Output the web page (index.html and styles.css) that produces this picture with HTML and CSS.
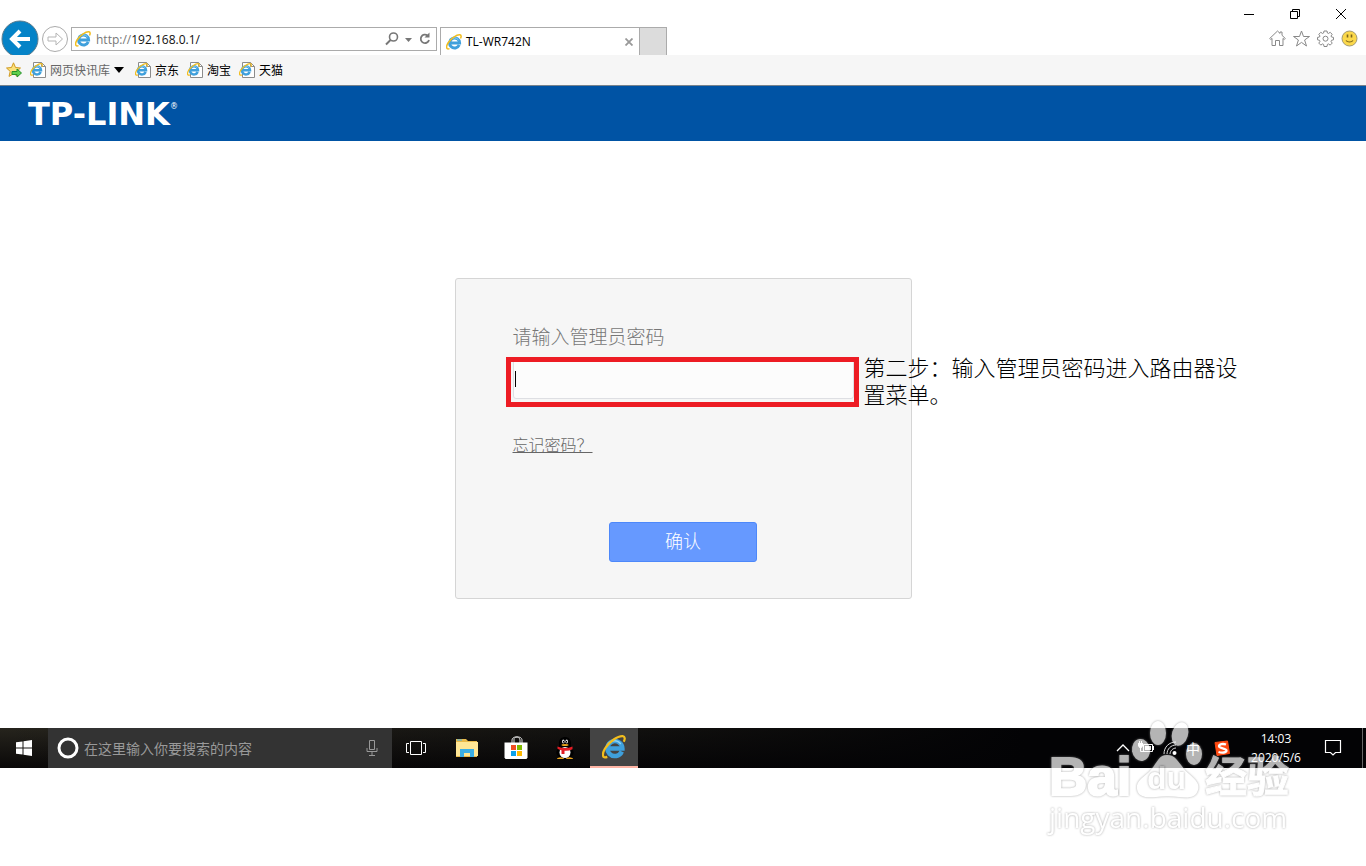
FILE: index.html
```html
<!DOCTYPE html>
<html lang="zh-CN">
<head>
<meta charset="utf-8">
<meta name="viewport" content="width=device-width, initial-scale=1">
<title>TL-WR742N</title>
<link rel="stylesheet" href="styles.css">
</head>
<body>
<svg class="defs" width="0" height="0" aria-hidden="true">
<symbol id="ie" viewBox="0 0 16 16">
<path d="M13.2 11A5 5 0 1 1 13.600 9H5" fill="none" stroke="#3fa0dc" stroke-width="3"/>
<path d="M4.200 6A5 5 0 0 1 12.500 6" fill="none" stroke="#8ed3f5" stroke-width="1"/>
<path d="M3.500 14.600C.2 16-.2 12.800 2 9 5 4.200 10.600 .6 13.800 .8 15.500 1 15.400 2.800 14.500 4.500" fill="none" stroke="#f2bd1d" stroke-width="1.500"/>
</symbol>
<symbol id="page" viewBox="0 0 16 16">
<path d="M3.500 .5h8l4 4v11h-12z" fill="#fff" stroke="#8c8c8c"/>
<path d="M11.500 .5v4h4" fill="none" stroke="#8c8c8c"/>
<use href="#ie" x="0" y="1" width="13" height="13"/>
</symbol>
</svg>

<header class="chrome">
<button class="nav" aria-label="后退"><svg width="38" height="35" viewBox="0 0 38 35"><circle cx="19" cy="19" r="18" fill="#0583c7" stroke="#5b7c8d"/><path d="M29 19H11M19 11l-8 8 8 8" fill="none" stroke="#fff" stroke-width="4"/></svg></button>
<button class="nav fwd" aria-label="前进"><svg width="26" height="26" viewBox="0 0 26 26"><circle cx="13" cy="13" r="12.500" fill="#fff" stroke="#ababab"/><path d="M6 11h8V7l6.500 6-6.500 6v-4H6z" fill="none" stroke="#b5b5b5"/></svg></button>
<div class="address">
<svg width="16" height="16"><use href="#ie"/></svg>
<label for="url">http://</label><input id="url" type="text" value="192.168.0.1/">
<button aria-label="搜索"><svg width="14" height="14" viewBox="0 0 14 14"><circle cx="8.500" cy="5" r="4" fill="none" stroke="#777" stroke-width="1.600"/><path d="M5.500 8L1 12.500" stroke="#777" stroke-width="2"/></svg></button>
<button aria-label="历史"><svg width="8" height="14"><path d="M1 6h7l-3.500 4z" fill="#777"/></svg></button>
<button class="reload" aria-label="刷新"><svg width="12" height="14" viewBox="0 0 12 14"><path d="M8.500 3.500A4.200 4.200 0 1 0 10 8" fill="none" stroke="#777" stroke-width="1.800"/><path d="M5.500 5.500H10.500V.5z" fill="#777"/></svg></button>
</div>
<div class="tab">
<svg width="16" height="16"><use href="#ie"/></svg>
<span>TL-WR742N</span>
<button aria-label="关闭标签页"><svg width="8" height="8"><path d="M.5 .5l7 7M7.500 .5l-7 7" stroke="#999" stroke-width="1.800"/></svg></button>
</div>
<button class="newtab" aria-label="新建标签页"></button>
<div class="right">
<div class="win">
<button aria-label="最小化"><svg width="12" height="12"><path d="M1 6.500h10" stroke="#000"/></svg></button>
<button aria-label="还原"><svg width="12" height="12"><path d="M1.500 3.500h7v7h-7zM3.500 3V1.500h7v7H9" fill="none" stroke="#000"/></svg></button>
<button aria-label="关闭"><svg width="12" height="12"><path d="M1 1l10 10M11 1L1 11" stroke="#000"/></svg></button>
</div>
<div class="tools">
<button aria-label="主页"><svg width="17" height="17" viewBox="0 0 17 17"><path d="M.7 8.500L8.500 1l2.500 2.400V2h2v3.300l3.300 3.200-1 1-1.300-1.100v7.100h-3.500v-5h-4v5H3V8.400L1.700 9.500z" fill="none" stroke="#888"/></svg></button>
<button aria-label="收藏"><svg width="17" height="17" viewBox="0 0 17 17"><path d="M8.500 1l2 5.500h6L11.600 10l1.900 6-5-3.600-5 3.600 1.900-6L.5 6.500h6z" fill="none" stroke="#888"/></svg></button>
<button aria-label="工具"><svg width="17" height="17" viewBox="0 0 17 17"><path d="M7 1h3l.4 2 1 .5 1.800-1.200 2 2L14 6l.5 1 2 .4v2.400l-2 .5-.5 1 1.200 1.800-2 2-1.800-1.200-1 .5L10 16.500H7l-.4-2.100-1-.5-1.800 1.200-2-2L3 11.300l-.5-1-2-.5V7.400l2-.4.5-1-1.200-1.700 2-2 1.800 1.200 1-.5z" fill="none" stroke="#888"/><circle cx="8.500" cy="8.700" r="2.500" fill="none" stroke="#888"/></svg></button>
<button aria-label="反馈"><svg width="17" height="17" viewBox="0 0 17 17"><circle cx="8.500" cy="8.500" r="7.500" fill="#fbd84b" stroke="#a39a72"/><path d="M6.500 4.500v3M10.500 4.500v3" stroke="#7b651c" stroke-width="1.600"/><path d="M5 10.500c1.500 2 5.500 2 7 0" fill="none" stroke="#7b651c" stroke-width="1.200"/></svg></button>
</div>
</div>
</header>

<nav class="bookmarks">
<button aria-label="添加到收藏夹栏"><svg width="16" height="16" viewBox="0 0 16 16"><path d="M7.500 .8l2 4.700 5 .5-3.800 3.400 1.200 5-4.400-2.700L3 14.400l1.200-5L.5 6l5-.5z" fill="#fbe17a" stroke="#d09a22"/><path d="M6 9.500h5V7l4.500 4-4.500 4v-2.500H6z" fill="#5fd04c" stroke="#27902b"/></svg></button>
<a class="feeds" href="#"><svg width="16" height="16"><use href="#page"/></svg>网页快讯库<svg width="10" height="6"><path d="M0 0h10L5 6z" fill="#000"/></svg></a>
<a href="#"><svg width="16" height="16"><use href="#page"/></svg>京东</a>
<a href="#"><svg width="16" height="16"><use href="#page"/></svg>淘宝</a>
<a href="#"><svg width="16" height="16"><use href="#page"/></svg>天猫</a>
</nav>

<div class="brand">TP-LINK<sup>®</sup></div>

<main>
<form class="login" onsubmit="return false">
<label for="pwd">请输入管理员密码</label>
<div class="field">
<input id="pwd" type="password">
<span class="caret"></span>
<div class="mark"></div>
<p class="note">第二步：输入管理员密码进入路由器设置菜单。</p>
</div>
<a href="#">忘记密码？</a>
<button>确认</button>
</form>
</main>

<footer class="taskbar">
<button class="task" aria-label="开始"><svg width="16" height="16"><path d="M0 2.300L6.500 1.400V7.500H0zM7.500 1.200L16 0v7.500H7.500zM0 8.500h6.500v6.100L0 13.700zM7.500 8.500H16V16l-8.500-1.200z" fill="#fff"/></svg></button>
<div class="search">
<svg width="22" height="22"><circle cx="11" cy="11" r="9" fill="none" stroke="#fff" stroke-width="3"/></svg>
<input type="text" placeholder="在这里输入你要搜索的内容" aria-label="搜索">
<svg width="12" height="18"><path d="M3.500 1.500h5v9h-5zM1 9v3.500h10V9M6 12.500V16M3 16.500h6" fill="none" stroke="#999"/></svg>
</div>
<div class="apps">
<button class="task view" aria-label="任务视图"><svg width="20" height="14"><path d="M4.500 .5h11v13h-11zM3 2.500H.5v9H3M17 2.500h2.500v9H17" fill="none" stroke="#fff"/></svg></button>
<button class="task" aria-label="文件资源管理器"><svg width="22" height="18"><path d="M0 0h10l2 2h9v16H0z" fill="#e9b94a"/><path d="M0 3h22v14H0z" fill="#ffe695"/><path d="M1 1h5" stroke="#43b2e5"/><path d="M4 18v-8h14v8h-4v-4H8v4z" fill="#3baee5"/></svg></button>
<button class="task" aria-label="应用商店"><svg width="24" height="24"><path d="M8 7V4c0-4 8-4 8 0v3M10 7V3c0-3 8-3 8 1v3" fill="none" stroke="#ddd"/><path d="M.5 6.500h23v15l-1 1.500h-21l-1-1.500z" fill="#fff"/><path d="M7 9h5v5H7z" fill="#f04e23"/><path d="M13 9h5v5h-5z" fill="#7fb900"/><path d="M7 15h5v5H7z" fill="#0da1e9"/><path d="M13 15h5v5h-5z" fill="#ffb900"/></svg></button>
<button class="task" aria-label="QQ"><svg width="18" height="24"><path d="M3 21c-4-3-3-7 0-9V7c0-8 12-8 12 0v5c3 2 4 6 0 9z" fill="#000"/><ellipse cx="9" cy="16.500" rx="5.500" ry="5.500" fill="#fff"/><ellipse cx="7.300" cy="5.500" rx="1.300" ry="2" fill="#ddd"/><ellipse cx="10.700" cy="5.500" rx="1.300" ry="2" fill="#ddd"/><path d="M7.500 5v1.500M10.500 5v1.500" stroke="#000"/><ellipse cx="9" cy="9" rx="3.500" ry="1" fill="#eba51e"/><path d="M1.500 10.500q7.500 3 15 0v2.700q-4 2-8 1.500v3.300H5.500v-3.800q-2-.5-4-1.500z" fill="#e31d25"/><path d="M1.500 22.500q3-1.500 6 0zM10.500 22.500q3-1.500 6 0z" fill="#eba51e" stroke="#eba51e"/></svg></button>
<button class="task on" aria-label="Internet Explorer"><svg width="24" height="24"><use href="#ie"/></svg></button>
</div>
<div class="tray">
<svg width="14" height="16"><path d="M1 11l6-6 6 6" fill="none" stroke="#fff" stroke-width="1.300"/></svg>
<svg width="16" height="16"><path d="M5.500 4.500h9v7h-9z" fill="none" stroke="#fff"/><path d="M7 6h6v4H7zM15 6h1v4h-1zM0 3h5v3L3.500 8h-2L0 6z" fill="#fff"/><path d="M1.500 1v2M3.500 1v2M2.500 8v3.500H6" fill="none" stroke="#fff"/></svg>
<svg width="16" height="16"><path d="M2 14C2 7 7 2 14 2M5 14c0-5 4-9 9-9M8 14c0-3 3-6 6-6" fill="none" stroke="#ddd"/><circle cx="12.500" cy="13" r="2" fill="#fff"/></svg>
<span class="ime">中</span>
<svg width="16" height="16"><path d="M1 2.500L13.500 1l2 12.500L3 15.500z" fill="#ff4a12" stroke="#ff4a12"/><path d="M12 4.500C9 3.500 5 4 5 6.200S12.500 8.200 12.500 10.500 8 13 4.500 12" fill="none" stroke="#fff" stroke-width="2.300"/></svg>
<time class="clock" datetime="2020-05-06T14:03">14:03<br>2020/5/6</time>
<svg class="notice" width="18" height="18"><path d="M1.500 1.500h15v12h-5l-2.500 2.500-2.500-2.500h-5z" fill="none" stroke="#fff" stroke-width="1.200"/></svg>
</div>
<svg class="watermark" width="256" height="124" viewBox="0 0 256 124">
<g>
<ellipse cx="99" cy="33" rx="9" ry="11" transform="rotate(-8 99 33)"/>
<ellipse cx="116" cy="16" rx="8" ry="12"/>
<ellipse cx="138" cy="17" rx="8" ry="12" transform="rotate(16 138 17)"/>
<ellipse cx="152" cy="37" rx="8" ry="11"/>
</g>
<path d="M125 38c10 0 12 10 21 18 8 7 12 11 10 17-2 8-10 8-19 7-8-1-15-1-23 0-10 1-18 0-19-8-1-7 4-10 12-17 8-8 9-17 18-17z"/>
<text class="bai" x="7" y="78">Bai</text>
<text class="du" x="105" y="72">du</text>
<text class="jy" x="163" y="75">经验</text>
<text class="site" x="7" y="111">jingyan.baidu.com</text>
</svg>
</footer>
</body>
</html>
```
FILE: styles.css
```css
*{box-sizing:border-box;margin:0;padding:0;}
body{background:#fff;min-height:100vh;display:flex;flex-direction:column;font-family:"Open Sans","Noto Sans CJK SC",sans-serif;font-size:12px;color:#000;}
button,input{border:0;background:none;font:inherit;color:inherit;outline:0;}
svg{display:block;flex:none;}
a{color:inherit;text-decoration:none;}
.defs{position:absolute;}

.chrome{display:flex;align-items:flex-end;height:55px;padding:0 2px 0 1px;}
.nav{flex:none;}
.fwd{margin:0 3px 3px;}
.address{flex:0 1 366px;min-width:120px;height:24px;margin-bottom:4px;padding:0 5px 0 3px;border:1px solid #ababab;display:flex;align-items:center;}
.address label{color:#777;margin-left:5px;}
.address input{flex:1;min-width:0;color:#111;}
.address button{margin-left:5px;}
.address .reload{margin-left:7px;}
.tab{width:200px;height:28px;margin-left:3px;padding:0 6px 0 5px;border:1px solid #ababab;border-bottom:0;display:flex;align-items:center;gap:4px;}
.tab span{flex:1;}
.newtab{width:28px;height:28px;margin-left:-1px;background:#dcdcdc;border:1px solid #ababab;border-bottom:0;}
.right{margin-left:auto;height:55px;}
.win{display:flex;height:28px;}
.win button{width:46px;display:flex;align-items:center;justify-content:center;}
.tools{display:flex;justify-content:flex-end;gap:7px;padding:2px 6px 0 0;}

.bookmarks{display:flex;align-items:center;height:31px;padding:0 6px;background:#f6f6f6;border-bottom:1px solid #77828c;}
.bookmarks a{display:flex;align-items:center;gap:4px;margin-right:8px;}
.bookmarks .feeds{color:#666;margin-left:8px;margin-right:11px;}

.brand{height:55px;padding-left:28px;background:#0053a4;color:#fff;font:bold 32px/57px "DejaVu Sans",sans-serif;white-space:nowrap;}
.brand sup{font-size:8px;line-height:8px;vertical-align:16px;font-weight:normal;}

main{flex:1;padding:137px 0 120px;}
.login{width:457px;height:321px;margin:0 auto;padding:0 57px;background:#f6f6f6;border:1px solid #d5d5d5;border-radius:3px;display:flex;flex-direction:column;align-items:flex-start;font-weight:300;}
.login label{margin-top:44px;font-size:19px;line-height:28px;color:#777;}
.field{position:relative;align-self:stretch;margin-top:8px;}
.field input{width:100%;height:40px;padding:0 8px;background:#fcfcfc;border:1px solid #dedfe3;border-radius:3px;font-size:18px;}
.caret{position:absolute;left:2px;top:12px;width:1px;height:16px;background:#000;}
.mark{position:absolute;top:-2px;left:-7px;right:-5px;height:50px;border:5px solid #ed1c24;}
.note{position:absolute;top:-5px;left:calc(100% + 10px);width:380px;font-size:22px;line-height:27px;}
.login a{margin-top:34px;font-size:16px;line-height:24px;color:#666;text-decoration:underline;}
.login button{align-self:center;width:148px;height:40px;margin-top:65px;padding-bottom:4px;background:#69f;border:1px solid #4d88fa;border-radius:3px;color:#fff;font-size:18px;}

.taskbar{position:relative;display:flex;height:40px;margin-bottom:98px;background:linear-gradient(90deg,rgba(3,3,5,0),rgba(3,3,5,.5) 40%,#030305 75%),linear-gradient(#26241d,#0a0808);color:#fff;}
.task{width:48px;height:40px;display:flex;align-items:center;justify-content:center;}
.search{flex:0 1 344px;background:#333;display:flex;align-items:center;padding:0 14px 0 9px;gap:5px;}
.search input{flex:1;min-width:0;font-size:14px;}
.search input::placeholder{color:#999;opacity:1;}
.apps{display:flex;gap:1px;}
.view{margin-right:2px;}
.on{background:#444;border-bottom:2px solid #ffb5a5;}
.tray{display:flex;align-items:center;margin-left:auto;margin-right:3px;border-right:1px solid #666;gap:8px;}
.ime{font-size:14px;margin-right:6px;}
.clock{width:64px;margin-left:6px;text-align:center;font-size:12px;line-height:19px;}
.notice{margin:0 20px 0 8px;}

.watermark{position:absolute;top:-11px;right:68px;overflow:visible;pointer-events:none;opacity:.7;fill:#fff;}
.watermark>*{filter:drop-shadow(0 0 1px #888);}
.bai{font:bold 53px "Liberation Sans",sans-serif;stroke:#fff;stroke-width:2px;}
.du{font:bold 32px "Liberation Sans",sans-serif;}
.jy{font:bold 42px "Noto Sans CJK SC",sans-serif;stroke:#fff;stroke-width:1px;}
.site{font:28px "Open Sans",sans-serif;}
```
